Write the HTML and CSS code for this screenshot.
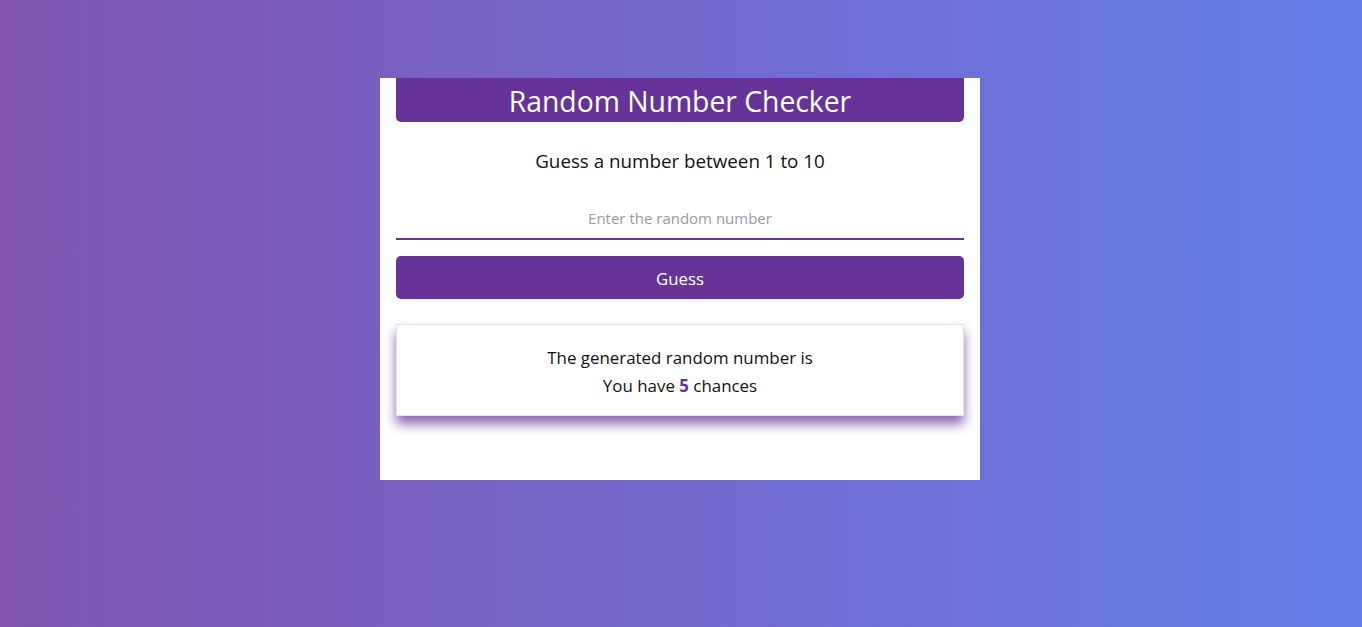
FILE: index.html
```html
<!DOCTYPE html>
<html lang="en">
<head>
<meta charset="utf-8">
<title>Random Number Checker</title>
<link rel="stylesheet" href="styles.css">
</head>
<body>
<main class="card">
  <h1 class="title">Random Number Checker</h1>
  <p class="prompt">Guess a number between 1 to 10</p>
  <input class="guess-input" type="text" placeholder="Enter the random number">
  <button class="guess-btn" type="button">Guess</button>
  <section class="result">
    <p class="result-line">The generated random number is</p>
    <p class="result-line">You have <strong class="chances">5</strong> chances</p>
  </section>
</main>
</body>
</html>
```

FILE: styles.css
```css
* { box-sizing: border-box; }
html, body { margin: 0; padding: 0; }
body {
  min-height: 100vh;
  background: linear-gradient(to right, #8054b0, #667eea);
  font-family: "Open Sans", "Noto Sans", sans-serif;
  color: #111;
  padding: 78px 2px 0 0;
}
.card {
  width: 600px;
  margin: 0 auto;
  background: #fff;
  padding: 0 16px 64px;
  display: flex;
  flex-direction: column;
  text-align: center;
}
.title {
  margin: 0;
  height: 44px;
  line-height: 46px;
  background: #663399;
  color: #fff;
  font-weight: 400;
  font-size: 28.3px;
  border-radius: 0 0 5px 5px;
}
.prompt {
  margin: 26px 0 0;
  font-size: 18.8px;
  line-height: 26px;
}
.guess-input {
  margin-top: 26px;
  height: 40px;
  border: none;
  border-bottom: 2px solid #663399;
  outline: none;
  text-align: center;
  font-family: inherit;
  font-size: 15px;
  padding: 0 0 2px;
  background: transparent;
}
.guess-input::placeholder { color: #9a9aa8; }
.guess-btn {
  margin-top: 16px;
  height: 43px;
  border: none;
  border-radius: 5px;
  background: #663399;
  color: #fff;
  font-family: inherit;
  font-size: 16.8px;
  padding: 2px 0 0;
}
.result {
  margin-top: 25px;
  height: 92px;
  border: 1px solid #e2e2e8;
  box-shadow: 0 8px 11px rgba(102, 51, 153, 0.75);
  padding-top: 19px;
}
.result-line {
  margin: 0;
  font-size: 16.9px;
  line-height: 28px;
}
.chances { color: #663399; font-weight: 700; }
```
